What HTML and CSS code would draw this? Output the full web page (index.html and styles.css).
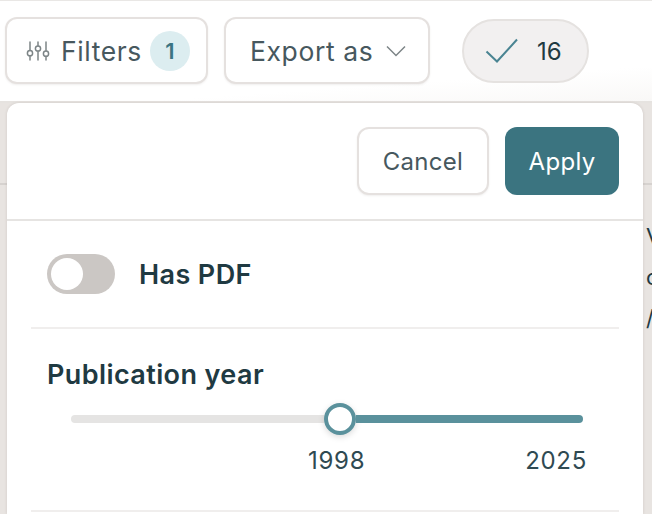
FILE: index.html
```html
<!DOCTYPE html>
<html lang="en">
<head>
<meta charset="utf-8">
<title>Filters</title>
<link rel="stylesheet" href="styles.css">
</head>
<body>
<header class="topbar">
  <button class="btn btn-filters">
    <svg class="icon-sliders" width="24" height="24" viewBox="0 0 24 24" fill="none" stroke="#7d8587" stroke-width="1.500" stroke-linecap="round">
      <path d="M4 11.500V3M4 17V21M12 6.500V3M12 12.500V21M20 11.500V3M20 17.500V21"/>
      <circle cx="4" cy="14.200" r="2.600"/>
      <circle cx="12" cy="9.500" r="2.600"/>
      <circle cx="20" cy="14.700" r="2.600"/>
    </svg>
    <span class="btn-text">Filters</span>
    <span class="count">1</span>
  </button>
  <button class="btn btn-export">
    <span class="btn-text">Export as</span>
    <svg width="20" height="12" viewBox="0 0 20 12" fill="none" stroke="#7d8587" stroke-width="1.500"><path d="M1 1.500l9 9 9-9"/></svg>
  </button>
  <div class="selected">
    <svg width="34" height="26" viewBox="0 0 34 26" fill="none" stroke="#4a8492" stroke-width="2"><path d="M1.500 13.500l10.500 10L32 1.500"/></svg>
    <span>16</span>
  </div>
</header>
<main class="content">
  <div class="behind-line"></div>
  <div class="behind-text">
    <span>V</span>
    <span>c</span>
    <span>/</span>
  </div>
  <section class="panel">
    <div class="actions">
      <button class="btn btn-cancel">Cancel</button>
      <button class="btn-apply">Apply</button>
    </div>
    <div class="row-pdf">
      <span class="toggle"><span class="knob"></span></span>
      <span class="label">Has PDF</span>
    </div>
    <div class="row-year">
      <div class="label">Publication year</div>
      <div class="slider">
        <div class="track-off"></div>
        <div class="thumb"></div>
        <div class="track-on"></div>
      </div>
      <div class="years">
        <span class="year-from">1998</span>
        <span>2025</span>
      </div>
    </div>
  </section>
</main>
</body>
</html>
```
FILE: styles.css
```css
* { box-sizing: border-box; }
html, body { margin: 0; height: 100%; }
body {
  width: 652px;
  height: 514px;
  overflow: hidden;
  background: #fff;
  font-family: Inter, "Liberation Sans", sans-serif;
  color: #1f3a42;
}
.topbar {
  height: 103px;
  display: flex;
  align-items: flex-start;
  padding: 16px 0 0 5px;
  border-top: 1px solid #e9e7e5;
  border-bottom: 2px solid #e6e3e0;
  background: linear-gradient(176deg, #fff 76%, #f9f8f7 100%);
}
.btn {
  font: inherit;
  background: #fff;
  border: 2px solid #e5e1df;
  border-radius: 12px;
  box-shadow: 0 1px 2px rgba(60, 50, 40, .08);
  color: #47585e;
  font-size: 24px;
  letter-spacing: .3px;
  display: flex;
  align-items: center;
  padding: 0;
}
.btn-filters,
.btn-export {
  font-size: 26.500px;
  letter-spacing: .6px;
}
.btn-text { padding-top: 1px; }
.btn-filters {
  width: 203px;
  height: 67px;
  padding-left: 19px;
}
.icon-sliders { margin-right: 11px; }
.count {
  width: 40px;
  height: 40px;
  margin-left: 8px;
  border-radius: 50%;
  background: #dcedf0;
  color: #3b7482;
  font-size: 22px;
  letter-spacing: 0;
  font-weight: 600;
  display: flex;
  align-items: center;
  justify-content: center;
}
.btn-export {
  width: 206px;
  height: 67px;
  margin-left: 16px;
  padding-left: 24px;
  gap: 13px;
}
.selected {
  width: 127px;
  height: 64px;
  margin: 2px 0 0 32px;
  border: 2px solid #e5e2e0;
  border-radius: 32px;
  background: #f2f0f0;
  display: flex;
  align-items: center;
  padding-left: 21px;
  gap: 18px;
  font-size: 24px;
  color: #1f3a42;
}
.content {
  position: relative;
  height: 411px;
  background: #e8e4e1;
}
.behind-line {
  position: absolute;
  left: 0;
  right: 0;
  top: 80px;
  height: 2px;
  background: #d6d2cf;
}
.behind-text {
  position: absolute;
  left: 646px;
  top: 113px;
  display: flex;
  flex-direction: column;
  font-size: 22px;
  line-height: 41px;
  color: #1f3a42;
}
.panel {
  position: absolute;
  left: 7px;
  top: 0;
  width: 636px;
  height: 411px;
  background: #fff;
  border-radius: 12px 12px 0 0;
  box-shadow: 0 0 3px rgba(60, 50, 40, .15);
}
.actions {
  height: 118px;
  display: flex;
  justify-content: flex-end;
  align-items: flex-start;
  gap: 16px;
  padding: 24px 24px 0 0;
  border-bottom: 2px solid #e6e4e2;
}
.btn-cancel {
  width: 132px;
  height: 68px;
  justify-content: center;
}
.btn-apply {
  font: inherit;
  font-size: 24px;
  letter-spacing: .3px;
  width: 114px;
  height: 68px;
  border: 0;
  border-radius: 12px;
  background: #3b7480;
  color: #fff;
}
.row-pdf {
  height: 108px;
  margin: 0 24px;
  padding: 33px 0 0 16px;
  display: flex;
  align-items: flex-start;
  gap: 24px;
  border-bottom: 2px solid #f0eeed;
}
.toggle {
  width: 68px;
  height: 40px;
  border-radius: 20px;
  background: #cbc7c4;
  padding: 4px;
}
.knob {
  display: block;
  width: 32px;
  height: 32px;
  border-radius: 50%;
  background: #fff;
}
.label {
  font-size: 27px;
  line-height: 42px;
  font-weight: 600;
  letter-spacing: .4px;
  color: #1f3a42;
}
.row-year {
  height: 183px;
  margin: 0 24px;
  padding: 25px 0 0 16px;
  border-bottom: 2px solid #f0eeed;
}
.slider {
  display: flex;
  align-items: center;
  height: 32px;
  margin: 7px 36px 0 24px;
}
.track-off {
  width: 252.500px;
  height: 8px;
  border-radius: 4px 0 0 4px;
  background: #e5e4e3;
}
.thumb {
  flex: none;
  width: 32px;
  height: 32px;
  border: 4px solid #5a919c;
  border-radius: 50%;
  background: #fff;
  box-shadow: 0 2px 6px rgba(0, 0, 0, .15);
}
.track-on {
  flex: 1;
  height: 8px;
  border-radius: 0 4px 4px 0;
  background: #5a919c;
}
.years {
  display: flex;
  justify-content: space-between;
  margin: 10px 32px 0 0;
  font-size: 24px;
  line-height: 32px;
  letter-spacing: .7px;
  color: #2f4a52;
}
.year-from { margin-left: 261px; }
```
